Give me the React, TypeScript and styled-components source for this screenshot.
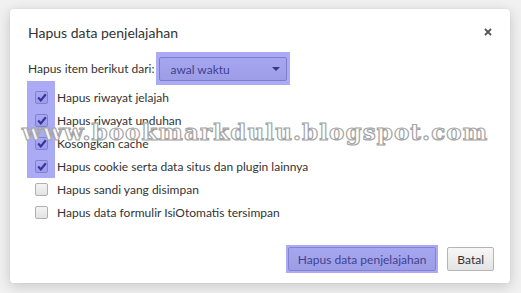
import React from "react";
import styled, { createGlobalStyle } from "styled-components";

const GlobalStyle = createGlobalStyle`
  html, body {
    margin: 0;
    padding: 0;
    background: #f1f1f1;
  }
  body {
    font-family: Lato, "Liberation Sans", Arial, sans-serif;
  }
`;

const Page = styled.div`
  position: relative;
  width: 521px;
  height: 293px;
  padding: 9px 11px 10px 10px;
  box-sizing: border-box;
  display: flex;
  overflow: hidden;
`;

const Dialog = styled.div`
  flex: 1;
  background: #fff;
  border-radius: 3px;
  box-shadow: 0 3px 14px rgba(0, 0, 0, 0.18), 0 0 1px rgba(0, 0, 0, 0.2);
  padding: 14px 16px 10px 18px;
  display: flex;
  flex-direction: column;
  color: #333;
`;

const Header = styled.div`
  display: flex;
  align-items: center;
  justify-content: space-between;
  height: 18px;
`;

const Title = styled.h1`
  margin: 0;
  font-size: 14px;
  font-weight: 400;
  color: #333;
`;

const Close = styled.button`
  border: 0;
  background: none;
  padding: 0;
  width: 12px;
  height: 12px;
  display: flex;
  align-items: center;
  justify-content: center;
`;

const RangeRow = styled.div`
  display: flex;
  align-items: center;
  margin-top: 11px;
  font-size: 12px;
  gap: 2px;
`;

const Highlight = styled.span<{ $pad: string }>`
  position: relative;
  display: inline-flex;
  padding: ${(p) => p.$pad};

  &::after {
    content: "";
    position: absolute;
    inset: 0;
    background: rgba(80, 80, 235, 0.48);
    pointer-events: none;
  }
`;

const Select = styled.div`
  width: 128px;
  height: 24px;
  box-sizing: border-box;
  border: 1px solid #aaa;
  border-radius: 2px;
  background: linear-gradient(#f6f6f6, #e4e4e4);
  display: flex;
  align-items: center;
  justify-content: space-between;
  padding: 0 6px 0 10px;
  font-size: 12px;
  color: #333;
`;

const Arrow = styled.span`
  width: 0;
  height: 0;
  border-left: 4px solid transparent;
  border-right: 4px solid transparent;
  border-top: 4px solid #222;
`;

const List = styled.div`
  position: relative;
  display: flex;
  flex-direction: column;
  margin-top: 0;
  padding-top: 1px;
`;

const ColumnMark = styled.div`
  position: absolute;
  left: -1px;
  top: -4px;
  width: 28px;
  height: 97px;
  background: rgba(80, 80, 235, 0.48);
  pointer-events: none;
`;

const Option = styled.label`
  display: flex;
  align-items: center;
  height: 23px;
  padding-left: 7px;
  font-size: 12px;
  color: #333;
  gap: 9px;
`;

const Box = styled.span<{ $on: boolean }>`
  width: 13px;
  height: 13px;
  box-sizing: border-box;
  border: 1px solid #b0b0b0;
  border-radius: 2px;
  background: ${(p) => (p.$on ? "linear-gradient(#fbfbfb, #e6e6e6)" : "linear-gradient(#f4f4f4, #e2e2e2)")};
  display: flex;
  align-items: center;
  justify-content: center;
`;

const Footer = styled.div`
  margin-top: auto;
  display: flex;
  justify-content: flex-end;
  align-items: center;
  gap: 9px;
`;

const Button = styled.button`
  height: 24px;
  box-sizing: border-box;
  border: 1px solid #b5b5b5;
  border-radius: 2px;
  background: linear-gradient(#f7f7f7, #e3e3e3);
  font-family: inherit;
  font-size: 12px;
  color: #333;
  padding: 0 9px;
`;

const Watermark = styled.div`
  position: absolute;
  left: 22px;
  top: 118px;
  font-family: "DejaVu Serif", "Liberation Serif", serif;
  font-weight: 700;
  font-size: 23px;
  letter-spacing: 1.1px;
  color: rgba(255, 255, 255, 0.85);
  -webkit-text-stroke: 1.2px #a4a4a4;
  white-space: nowrap;
  pointer-events: none;
`;

const Check = () => (
  <svg width="10" height="9" viewBox="0 0 10 9">
    <path d="M1.2 4.6 L3.8 7.4 L8.8 1.2" fill="none" stroke="#1e1e5a" strokeWidth="2.2" />
  </svg>
);

const options = [
  { text: "Hapus riwayat jelajah", on: true },
  { text: "Hapus riwayat unduhan", on: true },
  { text: "Kosongkan cache", on: true },
  { text: "Hapus cookie serta data situs dan plugin lainnya", on: true },
  { text: "Hapus sandi yang disimpan", on: false },
  { text: "Hapus data formulir IsiOtomatis tersimpan", on: false },
];

export default function App() {
  return (
    <>
      <GlobalStyle />
      <Page>
        <Dialog>
          <Header>
            <Title>Hapus data penjelajahan</Title>
            <Close aria-label="Tutup">
              <svg width="8" height="8" viewBox="0 0 8 8">
                <path d="M1 1 L7 7 M7 1 L1 7" stroke="#555" strokeWidth="1.8" />
              </svg>
            </Close>
          </Header>

          <RangeRow>
            <span>Hapus item berikut dari:</span>
            <Highlight $pad="5px 3px 4px 3px">
              <Select>
                <span>awal waktu</span>
                <Arrow />
              </Select>
            </Highlight>
          </RangeRow>

          <List>
            {options.map((o) => (
              <Option key={o.text}>
                <Box $on={o.on}>{o.on && <Check />}</Box>
                <span>{o.text}</span>
              </Option>
            ))}
            <ColumnMark />
          </List>

          <Footer>
            <Highlight $pad="2px">
              <Button>Hapus data penjelajahan</Button>
            </Highlight>
            <Button>Batal</Button>
          </Footer>
        </Dialog>
        <Watermark>www.bookmarkdulu.blogspot.com</Watermark>
      </Page>
    </>
  );
}
